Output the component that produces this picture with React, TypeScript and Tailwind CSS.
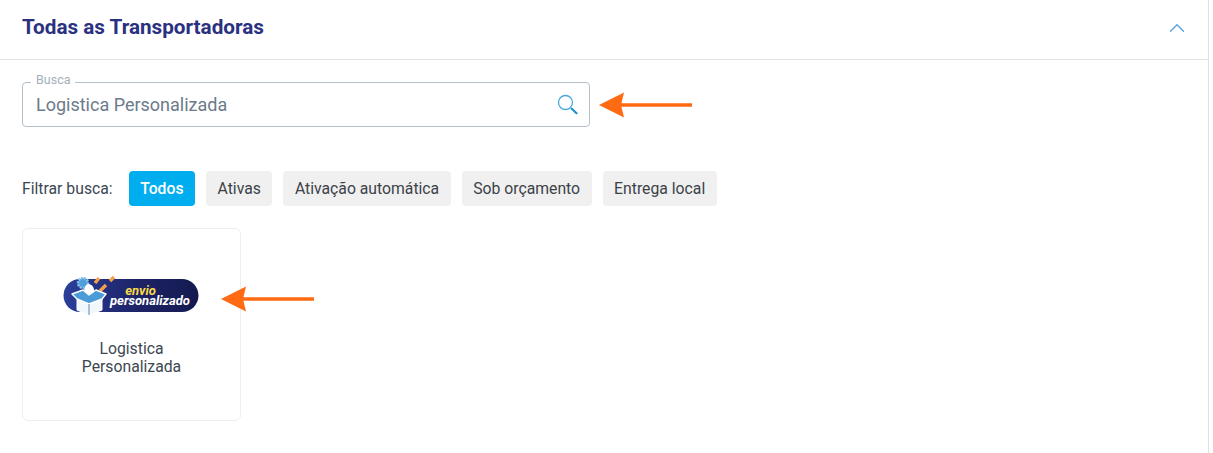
import React from 'react';
import { ChevronUp } from 'lucide-react';

const filters = ['Todos', 'Ativas', 'Ativação automática', 'Sob orçamento', 'Entrega local'];

const Arrow = ({ className }: { className: string }) => (
  <svg className={className} width="96" height="28" viewBox="0 0 96 28" fill="none">
    <path d="M16 12.2H94V15.8H16Z" fill="#ff6a13" />
    <path d="M1 14L26 1.5L23 14L26 26.5Z" fill="#ff6a13" />
  </svg>
);

const SearchIcon = () => (
  <svg width="21" height="21" viewBox="0 0 21 21" fill="none">
    <circle cx="8.5" cy="8.5" r="7" stroke="#4aa8de" strokeWidth="1.3" />
    <path d="M13.7 13.7L15 15" stroke="#4aa8de" strokeWidth="1.3" />
    <path d="M15 15L19.5 19.2" stroke="#1f8fcf" strokeWidth="2.2" strokeLinecap="round" />
  </svg>
);

const Logo = () => (
  <svg width="140" height="42" viewBox="0 0 140 42" fill="none">
    <defs>
      <linearGradient id="pill" x1="0" y1="0" x2="1" y2="0">
        <stop offset="0" stopColor="#2b3f9b" />
        <stop offset="0.55" stopColor="#1d2366" />
        <stop offset="1" stopColor="#141a4f" />
      </linearGradient>
    </defs>
    <rect x="1.5" y="6" width="135" height="33" rx="16.5" fill="url(#pill)" />
    {/* stripes */}
    <path d="M33 10l4-5M48 8l4-4M38 18l6-6" stroke="#f3a04a" strokeWidth="3.5" />
    {/* gear */}
    <circle cx="21" cy="10" r="5" fill="#4f9fdc" stroke="#8cc4ee" strokeWidth="2.5" strokeDasharray="2 1" />
    {/* person coming out of the box */}
    <path d="M27 11c4 1 6 5 5 10h-9c-2-4 0-10 4-10Z" fill="#ffffff" />
    {/* box */}
    <path d="M15 26L27 31L40 26V37L27 42L15 37Z" fill="#f2f7fb" stroke="#ffffff" strokeWidth="1" />
    <path d="M15 26L10 21L21 17L27 22L34 17L44 21L40 26L27 31Z" fill="#4b9bd8" stroke="#ffffff" strokeWidth="1.4" strokeLinejoin="round" />
    <path d="M27 31V42" stroke="#5a89b8" strokeWidth="1" />
    <text x="78.5" y="22" textAnchor="middle" fill="#f6d94a" fontSize="13" fontWeight="700" fontStyle="italic" fontFamily="Roboto, sans-serif">
      envio
    </text>
    <text x="88" y="32" textAnchor="middle" fill="#ffffff" fontSize="13" fontWeight="700" fontStyle="italic" fontFamily="Roboto, sans-serif">
      personalizado
    </text>
  </svg>
);

export default function App() {
  return (
    <div className="relative h-[453px] w-[1213px] overflow-hidden bg-white font-['Roboto',sans-serif]">
      <div className="h-full w-[1209px] border-r border-[#dfe3e7]">
        <header className="flex h-[60px] items-center justify-between border-b border-[#dfe3e7] pb-[3px] pl-[22px] pr-[18px]">
          <h2 className="text-[20.7px] font-bold text-[#2a3180]">Todas as Transportadoras</h2>
          <ChevronUp size={26} strokeWidth={1.1} className="text-[#4f9fdc]" />
        </header>

        <div className="px-[22px]">
          <div className="relative mt-[22px] flex h-[45px] w-[568px] items-center justify-between rounded-[4px] border border-[#b5bfc9] pl-[13px] pr-[11px]">
            <span className="absolute left-[8px] top-[-10px] bg-white px-[5px] text-[12.5px] leading-[14px] text-[#a3afbb]">
              Busca
            </span>
            <span className="text-[18px] text-[#6b7b8a]">Logistica Personalizada</span>
            <SearchIcon />
          </div>

          <div className="mt-[44px] flex items-center">
            <span className="mr-[16px] text-[15.75px] text-[#3c4752]">Filtrar busca:</span>
            <div className="flex gap-[11px]">
              {filters.map((f, i) => (
                <button
                  key={f}
                  className={`h-[35px] rounded-[4px] px-[11.5px] text-[15.75px] ${
                    i === 0 ? 'bg-[#00aeef] font-medium text-white' : 'bg-[#f0f0f0] text-[#3c4248]'
                  }`}
                >
                  {f}
                </button>
              ))}
            </div>
          </div>

          <div className="mt-[22px] flex h-[193px] w-[219px] flex-col items-center rounded-[6px] border border-[#eeeeee] pt-[44px]">
            <Logo />
            <p className="mt-[25px] w-[120px] text-center text-[15.75px] leading-[18px] text-[#3c4752]">
              Logistica Personalizada
            </p>
          </div>
        </div>
      </div>

      <Arrow className="absolute left-[598px] top-[91px]" />
      <Arrow className="absolute left-[220px] top-[285px]" />
    </div>
  );
}
